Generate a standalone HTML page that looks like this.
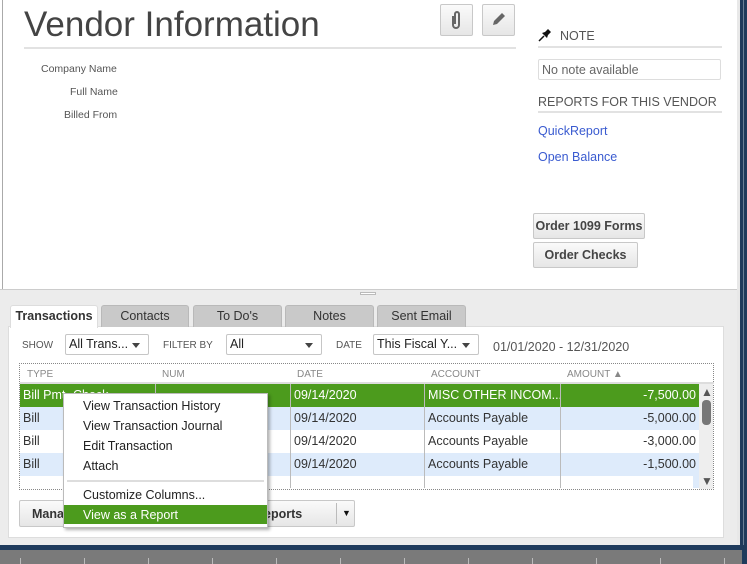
<!DOCTYPE html>
<html><head><style>
*{margin:0;padding:0;box-sizing:border-box}
body{width:747px;height:564px;position:relative;overflow:hidden;background:#fff;font-family:"Liberation Sans",sans-serif;font-size:12px;color:#333}
.a{position:absolute}
.btn{position:absolute;background:linear-gradient(#fafafa,#e6e6e6);border:1px solid #c8c8c8;border-radius:2px}
.tab{position:absolute;top:305px;height:22px;background:#c9c9c9;border:1px solid #b9b9b9;border-bottom:none;border-radius:3px 3px 0 0;text-align:center;line-height:21px;font-size:12.5px;color:#333}
.sel{position:absolute;height:21px;background:#fff;border:1px solid #c6c6c6;border-radius:2px;font-size:12.5px;line-height:19px;padding-left:3px;color:#222}
.sel:after{content:"";position:absolute;right:8px;top:8px;border:4px solid transparent;border-top:5px solid #444}
.lbl{position:absolute;font-size:10px;color:#555}
.row{position:absolute;left:20px;width:679px;height:23px;font-size:12.5px;line-height:23px}
.row span{position:absolute;top:0}
.mi{position:absolute;left:19px;font-size:12.5px;color:#222}
</style></head><body>
<div class="a" style="left:2px;top:0;width:1px;height:290px;background:#aaa"></div>
<div class="a" style="left:24px;top:5px;font-size:35px;color:#444">Vendor Information</div>
<div class="a" style="left:24px;top:47px;width:492px;height:2px;background:#e2e2e2"></div>
<div class="btn" style="left:440px;top:4px;width:33px;height:32px"></div>
<svg class="a" style="left:449px;top:10px" width="14" height="20" viewBox="0 0 14 20"><path d="M4 6v9a3 3 0 0 0 6 0V4a2 2 0 0 0-4 0v10" fill="none" stroke="#666" stroke-width="2"/></svg>
<div class="btn" style="left:482px;top:4px;width:33px;height:32px"></div>
<svg class="a" style="left:490px;top:11px" width="17" height="17" viewBox="0 0 17 17"><path d="M3 14l1-4 8-8 3 3-8 8z" fill="#666"/></svg>
<div class="a" style="left:41px;top:63px;font-size:10.5px;color:#555">Company Name</div>
<div class="a" style="left:70px;top:86px;font-size:10.5px;color:#555">Full Name</div>
<div class="a" style="left:64px;top:109px;font-size:10.5px;color:#555">Billed From</div>
<svg class="a" style="left:538px;top:28px" width="14" height="14" viewBox="0 0 14 14"><path d="M1 13l5-5" stroke="#111" stroke-width="1.5"/><path d="M4 5l5 5 1-3 3-3-3-3-3 3z" fill="#111"/></svg>
<div class="a" style="left:560px;top:29px;font-size:12.5px;color:#555">NOTE</div>
<div class="a" style="left:538px;top:46px;width:184px;height:2px;background:#e2e2e2"></div>
<div class="a" style="left:538px;top:59px;width:183px;height:21px;border:1px solid #ddd;border-radius:2px;font-size:12.5px;color:#666;padding:3px 0 0 3px">No note available</div>
<div class="a" style="left:538px;top:95px;font-size:12.5px;color:#555">REPORTS FOR THIS VENDOR</div>
<div class="a" style="left:538px;top:111px;width:184px;height:2px;background:#e2e2e2"></div>
<div class="a" style="left:538px;top:124px;font-size:12.5px;color:#3a5bd0">QuickReport</div>
<div class="a" style="left:538px;top:150px;font-size:12.5px;color:#3a5bd0">Open Balance</div>
<div class="btn" style="left:533px;top:213px;width:112px;height:26px;font-weight:bold;font-size:12.5px;text-align:center;line-height:24px;color:#444">Order 1099 Forms</div>
<div class="btn" style="left:533px;top:242px;width:105px;height:26px;font-weight:bold;font-size:12.5px;text-align:center;line-height:24px;color:#444">Order Checks</div>
<div class="a" style="left:737px;top:0;width:3px;height:551px;background:#e8e8e8"></div>
<div class="a" style="left:740px;top:0;width:7px;height:551px;background:#1f3b5c"></div>
<div class="a" style="left:743px;top:0;width:1px;height:551px;background:#6b7f95"></div>
<div class="a" style="left:0;top:289px;width:737px;height:257px;background:#ececec"></div>
<div class="a" style="left:0;top:289px;width:737px;height:1px;background:#ccc"></div>
<div class="a" style="left:360px;top:292px;width:16px;height:3px;border:1px solid #bbb;background:#fff"></div>
<div class="a" style="left:8px;top:326px;width:716px;height:212px;background:#fff;border:1px solid #ddd"></div>
<div class="tab" style="left:10px;width:88px;background:#fff;font-weight:bold;height:23px;border-color:#ddd">Transactions</div>
<div class="tab" style="left:101px;width:88px">Contacts</div>
<div class="tab" style="left:193px;width:89px">To Do's</div>
<div class="tab" style="left:285px;width:89px">Notes</div>
<div class="tab" style="left:377px;width:89px">Sent Email</div>
<div class="lbl" style="left:22px;top:340px">SHOW</div>
<div class="sel" style="left:65px;top:334px;width:84px">All Trans...</div>
<div class="lbl" style="left:163px;top:340px">FILTER BY</div>
<div class="sel" style="left:226px;top:334px;width:96px">All</div>
<div class="lbl" style="left:336px;top:340px">DATE</div>
<div class="sel" style="left:373px;top:334px;width:106px">This Fiscal Y...</div>
<div class="a" style="left:493px;top:340px;font-size:12.5px;color:#555">01/01/2020 - 12/31/2020</div>
<div class="a" style="left:19px;top:363px;width:695px;height:127px;border:1px dotted #888;background:#fff"></div>
<div class="a" style="left:20px;top:364px;width:694px;height:20px;font-size:10px;color:#888;border-bottom:2px solid #ddd">
<span class="a" style="left:7px;top:5px">TYPE</span><span class="a" style="left:142px;top:5px">NUM</span><span class="a" style="left:277px;top:5px">DATE</span><span class="a" style="left:411px;top:5px">ACCOUNT</span><span class="a" style="left:547px;top:5px">AMOUNT &#9650;</span></div>
<div class="row" style="top:384px;background:#4c9b1d;color:#fff"><span style="left:3px">Bill Pmt -Check</span><span style="left:274px">09/14/2020</span><span style="left:408px">MISC OTHER INCOM...</span><span style="right:3px">-7,500.00</span></div>
<div class="row" style="top:407px;background:#deebfb"><span style="left:3px">Bill</span><span style="left:274px">09/14/2020</span><span style="left:408px">Accounts Payable</span><span style="right:3px">-5,000.00</span></div>
<div class="row" style="top:430px;background:#fff"><span style="left:3px">Bill</span><span style="left:274px">09/14/2020</span><span style="left:408px">Accounts Payable</span><span style="right:3px">-3,000.00</span></div>
<div class="row" style="top:453px;background:#deebfb"><span style="left:3px">Bill</span><span style="left:274px">09/14/2020</span><span style="left:408px">Accounts Payable</span><span style="right:3px">-1,500.00</span></div>
<div class="a" style="left:20px;top:476px;width:679px;height:12px;background:#fff"></div>
<div class="a" style="left:693px;top:476px;width:6px;height:12px;background:#deebfb"></div>
<div class="a" style="left:155px;top:384px;width:1px;height:104px;background:#bbb"></div>
<div class="a" style="left:290px;top:384px;width:1px;height:104px;background:#bbb"></div>
<div class="a" style="left:424px;top:384px;width:1px;height:104px;background:#bbb"></div>
<div class="a" style="left:560px;top:384px;width:1px;height:104px;background:#bbb"></div>
<div class="a" style="left:699px;top:384px;width:14px;height:105px;background:#eee"></div>
<div class="a" style="left:701px;top:385px;color:#555;font-size:12px">&#9650;</div>
<div class="a" style="left:702px;top:400px;width:9px;height:25px;background:#777;border-radius:4px"></div>
<div class="a" style="left:701px;top:474px;color:#555;font-size:12px">&#9660;</div>
<div class="btn" style="left:19px;top:500px;width:336px;height:27px"></div>
<div class="a" style="left:32px;top:507px;font-weight:bold;font-size:12.5px;color:#333">Mana</div>
<div class="a" style="left:264px;top:507px;font-weight:bold;font-size:12.5px;color:#333">eports</div>
<div class="a" style="left:336px;top:503px;width:1px;height:21px;background:#bbb"></div>
<div class="a" style="left:342px;top:508px;font-size:9px;color:#111">&#9660;</div>
<div class="a" style="left:63px;top:393px;width:205px;height:135px;background:#fff;border:1px solid #bbb;box-shadow:2px 2px 3px rgba(0,0,0,.3)">
<div class="mi" style="top:5px">View Transaction History</div>
<div class="mi" style="top:25px">View Transaction Journal</div>
<div class="mi" style="top:45px">Edit Transaction</div>
<div class="mi" style="top:65px">Attach</div>
<div class="a" style="left:3px;top:86px;width:197px;height:2px;background:#ddd"></div>
<div class="mi" style="top:94px">Customize Columns...</div>
<div class="a" style="left:0;top:111px;width:203px;height:19px;background:#4c9b1d"></div>
<div class="mi" style="top:114px;color:#fff">View as a Report</div>
</div>
<div class="a" style="left:0;top:545px;width:747px;height:5px;background:#1f3b5c"></div>
<div class="a" style="left:0;top:550px;width:742px;height:14px;background:#7a7a7a"></div>
<div class="a" style="left:742px;top:550px;width:5px;height:14px;background:#1f3b5c"></div>
<div class="a" style="left:0;top:558px;width:742px;height:6px;background:repeating-linear-gradient(90deg,transparent 0,transparent 20px,#bbb 20px,#bbb 21px,transparent 21px,transparent 64px)"></div>
</body></html>
